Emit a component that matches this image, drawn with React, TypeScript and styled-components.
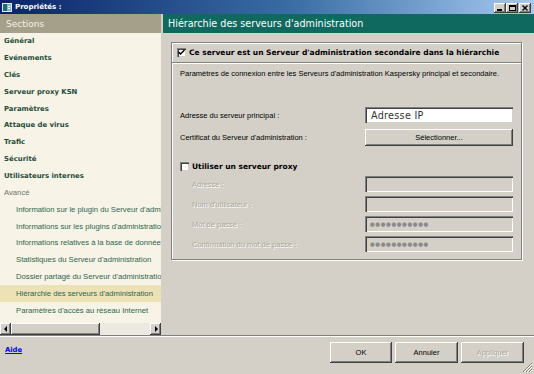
import React from "react";
import styled, { createGlobalStyle } from "styled-components";

const Global = createGlobalStyle`
  html, body { margin: 0; padding: 0; background: #d4d0c8; }
  * { box-sizing: border-box; }
`;

const FONT = `"Liberation Sans", Arial, sans-serif`;
const BOLD_FONT = `"DejaVu Sans", "Liberation Sans", sans-serif`;

const Window = styled.div`
  width: 534px;
  height: 374px;
  display: flex;
  flex-direction: column;
  background: #d4d0c8;
  overflow: hidden;
  font-family: ${FONT};
  font-size: 7.5px;
  color: #000;
  position: relative;
`;

const TitleBar = styled.div`
  height: 14px;
  flex: none;
  display: flex;
  align-items: center;
  padding: 0 3px 0 2px;
  background: linear-gradient(to right, #0a246a 0%, #3a6ea5 55%, #a6caf0 100%);
`;

const TitleText = styled.span`
  color: #fff;
  font-family: ${BOLD_FONT};
  font-weight: bold;
  font-size: 7px;
  margin-left: 3px;
  flex: 1;
`;

const WinButtons = styled.div`
  display: flex;
  margin-top: 1px;
`;

const WinButton = styled.div<{ $gap?: boolean }>`
  width: 12px;
  height: 10px;
  margin-left: ${(p) => (p.$gap ? "1px" : "0")};
  background: #d4d0c8;
  box-shadow: inset -1px -1px #404040, inset 1px 1px #fff, inset -2px -2px #808080;
  display: flex;
  align-items: center;
  justify-content: center;
`;

const Main = styled.div`
  height: 321px;
  flex: none;
  display: flex;
`;

const LeftPanel = styled.div`
  width: 161px;
  flex: none;
  display: flex;
  flex-direction: column;
`;

const SectionsHeader = styled.div`
  height: 19px;
  flex: none;
  background: #a5a08a;
  color: #f4f2ea;
  font-family: ${BOLD_FONT};
  font-size: 9px;
  display: flex;
  align-items: center;
  padding-left: 6px;
`;

const List = styled.div`
  flex: 1;
  background: #f7f3e6;
  overflow: hidden;
`;

const Item = styled.div<{ $kind: "bold" | "group" | "sub"; $selected?: boolean }>`
  height: 16.8px;
  display: flex;
  align-items: center;
  white-space: nowrap;
  padding-left: ${(p) => (p.$kind === "sub" ? "16px" : "4px")};
  font-family: ${(p) => (p.$kind === "bold" ? BOLD_FONT : FONT)};
  font-size: ${(p) => (p.$kind === "bold" ? "6.9px" : "7.7px")};
  font-weight: ${(p) => (p.$kind === "bold" ? "bold" : "normal")};
  color: ${(p) => (p.$kind === "bold" ? "#1d4c3c" : p.$kind === "sub" ? "#2c6650" : "#6e7468")};
  background: ${(p) => (p.$selected ? "#ede2b6" : "transparent")};
`;

const HScroll = styled.div`
  height: 12px;
  flex: none;
  display: flex;
  background: #ece9e2;
`;

const ScrollBtn = styled.div`
  width: 11px;
  height: 12px;
  background: #d4d0c8;
  box-shadow: inset -1px -1px #404040, inset 1px 1px #fff, inset -2px -2px #808080;
  display: flex;
  align-items: center;
  justify-content: center;
`;

const Thumb = styled.div`
  width: 89px;
  height: 12px;
  background: #d4d0c8;
  box-shadow: inset -1px -1px #404040, inset 1px 1px #fff, inset -2px -2px #808080;
`;

const Track = styled.div`
  flex: 1;
`;

const RightPanel = styled.div`
  flex: 1;
  margin-left: 2px;
  display: flex;
  flex-direction: column;
`;

const RightHeader = styled.div`
  height: 19px;
  flex: none;
  background: #10695f;
  color: #fff;
  font-family: ${BOLD_FONT};
  font-size: 9.6px;
  display: flex;
  align-items: center;
  padding-left: 5px;
`;

const Content = styled.div`
  padding: 9px 12px 0 8px;
`;

const GroupBox = styled.div`
  width: 351px;
  height: 218px;
  border: 1px solid #808080;
  box-shadow: inset 1px 1px #fff, 1px 1px #fff;
  display: flex;
  flex-direction: column;
`;

const GroupHead = styled.div`
  height: 20px;
  flex: none;
  display: flex;
  align-items: center;
  padding-left: 5px;
  border-bottom: 1px solid #808080;
  box-shadow: 0 1px #fff;
  font-family: ${BOLD_FONT};
  font-size: 7.5px;
  font-weight: bold;
`;

const CheckBox = styled.div`
  width: 9px;
  height: 9px;
  flex: none;
  background: #fff;
  box-shadow: inset 1px 1px #808080, inset 2px 2px #404040, inset -1px -1px #d4d0c8;
  margin-right: 3px;
  display: flex;
  align-items: center;
  justify-content: center;
`;

const GroupBody = styled.div`
  padding: 0 8px;
  display: flex;
  flex-direction: column;
`;

const Desc = styled.div`
  margin-top: 5px;
  height: 12px;
  line-height: 12px;
  white-space: nowrap;
`;

const FieldRow = styled.div<{ $top: number; $h: number; $indent?: boolean }>`
  margin-top: ${(p) => p.$top}px;
  height: ${(p) => p.$h}px;
  display: grid;
  grid-template-columns: 1fr 148px;
  align-items: center;
  padding-left: ${(p) => (p.$indent ? "12px" : "0")};
`;

const Label = styled.span<{ $disabled?: boolean }>`
  color: ${(p) => (p.$disabled ? "#aca899" : "#000")};
  text-shadow: ${(p) => (p.$disabled ? "1px 1px 0 #fff" : "none")};
  white-space: nowrap;
`;

const TextInput = styled.div`
  height: 100%;
  background: #fff;
  box-shadow: inset 1px 1px #808080, inset 2px 2px #404040, inset -1px -1px #d4d0c8;
  display: flex;
  align-items: center;
  padding-left: 6px;
  font-family: ${BOLD_FONT};
  font-size: 9.6px;
  color: #333;
  letter-spacing: 0.3px;
`;

const DisabledInput = styled.div`
  height: 100%;
  background: #d4d0c8;
  box-shadow: inset 1px 1px #808080, inset 2px 2px #404040, inset -1px -1px #fff;
  display: flex;
  align-items: center;
  padding-left: 5px;
  color: #8a8a8a;
  font-family: ${BOLD_FONT};
  font-size: 5.4px;
  letter-spacing: 0.65px;
`;

const Button = styled.div<{ $w: number; $disabled?: boolean }>`
  width: ${(p) => p.$w}px;
  height: 100%;
  background: #d4d0c8;
  box-shadow: inset -1px -1px #404040, inset 1px 1px #fff, inset -2px -2px #808080;
  display: flex;
  align-items: center;
  justify-content: center;
  color: ${(p) => (p.$disabled ? "#aca899" : "#000")};
  text-shadow: ${(p) => (p.$disabled ? "1px 1px 0 #fff" : "none")};
`;

const ProxyRow = styled.div`
  margin-top: 13px;
  height: 14px;
  display: flex;
  align-items: center;
  font-family: ${BOLD_FONT};
  font-size: 7.5px;
  font-weight: bold;
`;

const Footer = styled.div`
  flex: 1;
  border-top: 1px solid #808080;
  box-shadow: inset 0 1px #fff;
  display: flex;
  align-items: flex-start;
  justify-content: space-between;
  padding: 6px 10px 0 5px;
`;

const HelpLink = styled.a`
  color: #0000ff;
  font-family: ${BOLD_FONT};
  font-weight: bold;
  text-decoration: underline;
  margin-top: 4px;
  font-size: 6.8px;
`;

const ButtonBar = styled.div`
  display: flex;
  gap: 3px;
  height: 21px;
`;

const Grip = styled.svg`
  position: absolute;
  right: 1px;
  bottom: 1px;
`;

const Check = () => (
  <svg width="7" height="7" viewBox="0 0 7 7">
    <path d="M0.5 3 L2.5 5 L6.5 1" stroke="#000" strokeWidth="1.5" fill="none" />
  </svg>
);

const Arrow = ({ dir }: { dir: "l" | "r" }) => (
  <svg width="4" height="6" viewBox="0 0 4 6">
    {dir === "l" ? <path d="M3 0 L0 3 L3 6 Z" fill="#000" /> : <path d="M1 0 L4 3 L1 6 Z" fill="#000" />}
  </svg>
);

const AppIcon = () => (
  <svg width="10" height="9" viewBox="0 0 10 9">
    <rect x="0" y="0" width="10" height="9" fill="#e8e8e8" />
    <rect x="1" y="1" width="4" height="7" fill="#1b6d77" />
    <rect x="5" y="1" width="4" height="7" fill="#7fb7c8" />
    <rect x="6" y="3" width="2" height="1" fill="#fff" />
    <rect x="6" y="5" width="2" height="1" fill="#fff" />
  </svg>
);

const sections: { t: string; k: "bold" | "group" | "sub"; s?: boolean }[] = [
  { t: "Général", k: "bold" },
  { t: "Evénements", k: "bold" },
  { t: "Clés", k: "bold" },
  { t: "Serveur proxy KSN", k: "bold" },
  { t: "Paramètres", k: "bold" },
  { t: "Attaque de virus", k: "bold" },
  { t: "Trafic", k: "bold" },
  { t: "Sécurité", k: "bold" },
  { t: "Utilisateurs internes", k: "bold" },
  { t: "Avancé", k: "group" },
  { t: "Information sur le plugin du Serveur d'administration", k: "sub" },
  { t: "Informations sur les plugins d'administration", k: "sub" },
  { t: "Informations relatives à la base de données", k: "sub" },
  { t: "Statistiques du Serveur d'administration", k: "sub" },
  { t: "Dossier partagé du Serveur d'administration", k: "sub" },
  { t: "Hiérarchie des serveurs d'administration", k: "sub", s: true },
  { t: "Paramètres d'accès au réseau Internet", k: "sub" },
];

export default function App() {
  return (
    <>
      <Global />
      <Window>
        <TitleBar>
          <AppIcon />
          <TitleText>Propriétés :</TitleText>
          <WinButtons>
            <WinButton>
              <svg width="6" height="6" viewBox="0 0 6 6"><rect x="0" y="4" width="5" height="2" fill="#000" /></svg>
            </WinButton>
            <WinButton>
              <svg width="7" height="6" viewBox="0 0 7 6"><rect x="0.5" y="0.5" width="6" height="5" fill="none" stroke="#000" /><rect x="0" y="0" width="7" height="2" fill="#000" /></svg>
            </WinButton>
            <WinButton $gap>
              <svg width="6" height="6" viewBox="0 0 6 6"><path d="M0.5 0.5 L5.5 5.5 M5.5 0.5 L0.5 5.5" stroke="#000" strokeWidth="1.4" /></svg>
            </WinButton>
          </WinButtons>
        </TitleBar>
        <Main>
          <LeftPanel>
            <SectionsHeader>Sections</SectionsHeader>
            <List>
              {sections.map((s) => (
                <Item key={s.t} $kind={s.k} $selected={s.s}>
                  {s.t}
                </Item>
              ))}
            </List>
            <HScroll>
              <ScrollBtn><Arrow dir="l" /></ScrollBtn>
              <Thumb />
              <Track />
              <ScrollBtn><Arrow dir="r" /></ScrollBtn>
            </HScroll>
          </LeftPanel>
          <RightPanel>
            <RightHeader>Hiérarchie des serveurs d'administration</RightHeader>
            <Content>
              <GroupBox>
                <GroupHead>
                  <CheckBox><Check /></CheckBox>
                  Ce serveur est un Serveur d'administration secondaire dans la hiérarchie
                </GroupHead>
                <GroupBody>
                  <Desc>
                    Paramètres de connexion entre les Serveurs d'administration Kaspersky principal et secondaire.
                  </Desc>
                  <FieldRow $top={27} $h={16}>
                    <Label>Adresse du serveur principal :</Label>
                    <TextInput>Adresse IP</TextInput>
                  </FieldRow>
                  <FieldRow $top={6} $h={17}>
                    <Label>Certificat du Serveur d'administration :</Label>
                    <Button $w={148}>Sélectionner...</Button>
                  </FieldRow>
                  <ProxyRow>
                    <CheckBox />
                    Utiliser un serveur proxy
                  </ProxyRow>
                  <FieldRow $top={3} $h={16} $indent>
                    <Label $disabled>Adresse :</Label>
                    <DisabledInput />
                  </FieldRow>
                  <FieldRow $top={4} $h={16} $indent>
                    <Label $disabled>Nom d'utilisateur :</Label>
                    <DisabledInput />
                  </FieldRow>
                  <FieldRow $top={4} $h={16} $indent>
                    <Label $disabled>Mot de passe :</Label>
                    <DisabledInput>●●●●●●●●●●●</DisabledInput>
                  </FieldRow>
                  <FieldRow $top={4} $h={16} $indent>
                    <Label $disabled>Confirmation du mot de passe :</Label>
                    <DisabledInput>●●●●●●●●●●●</DisabledInput>
                  </FieldRow>
                </GroupBody>
              </GroupBox>
            </Content>
          </RightPanel>
        </Main>
        <Footer>
          <HelpLink>Aide</HelpLink>
          <ButtonBar>
            <Button $w={62}>OK</Button>
            <Button $w={63}>Annuler</Button>
            <Button $w={63} $disabled>Appliquer</Button>
          </ButtonBar>
        </Footer>
        <Grip width="11" height="11" viewBox="0 0 11 11">
          <path d="M10 1 L1 10 M10 4 L4 10 M10 7 L7 10" stroke="#808080" strokeWidth="1" />
          <path d="M10 2 L2 10 M10 5 L5 10 M10 8 L8 10" stroke="#fff" strokeWidth="1" />
        </Grip>
      </Window>
    </>
  );
}
